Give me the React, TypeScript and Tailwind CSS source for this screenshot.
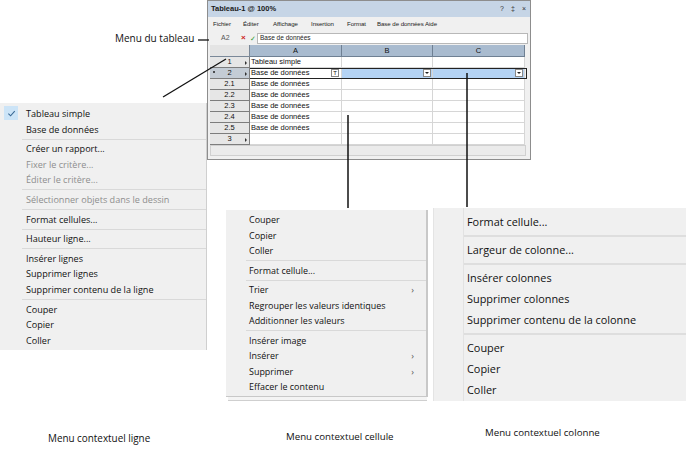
import React from 'react'

type Item = { label: string; disabled?: boolean; sub?: boolean; checked?: boolean } | 'sep'

const rowMenu: Item[] = [
  { label: 'Tableau simple', checked: true },
  { label: 'Base de données' },
  'sep',
  { label: 'Créer un rapport...' },
  { label: 'Fixer le critère...', disabled: true },
  { label: 'Éditer le critère...', disabled: true },
  'sep',
  { label: 'Sélectionner objets dans le dessin', disabled: true },
  'sep',
  { label: 'Format cellules...' },
  'sep',
  { label: 'Hauteur ligne...' },
  'sep',
  { label: 'Insérer lignes' },
  { label: 'Supprimer lignes' },
  { label: 'Supprimer contenu de la ligne' },
  'sep',
  { label: 'Couper' },
  { label: 'Copier' },
  { label: 'Coller' },
]

const cellMenu: Item[] = [
  { label: 'Couper' },
  { label: 'Copier' },
  { label: 'Coller' },
  'sep',
  { label: 'Format cellule...' },
  'sep',
  { label: 'Trier', sub: true },
  { label: 'Regrouper les valeurs identiques' },
  { label: 'Additionner les valeurs' },
  'sep',
  { label: 'Insérer image' },
  { label: 'Insérer', sub: true },
  { label: 'Supprimer', sub: true },
  { label: 'Effacer le contenu' },
]

const colMenu: Item[] = [
  { label: 'Format cellule...' },
  'sep',
  { label: 'Largeur de colonne...' },
  'sep',
  { label: 'Insérer colonnes' },
  { label: 'Supprimer colonnes' },
  { label: 'Supprimer contenu de la colonne' },
  'sep',
  { label: 'Couper' },
  { label: 'Copier' },
  { label: 'Coller' },
]

function Menu({
  items,
  className,
  itemClass,
  sepClass,
  children,
}: {
  items: Item[]
  className: string
  itemClass: string
  sepClass: string
  children?: React.ReactNode
}) {
  return (
    <div className={className}>
      {children}
      {items.map((it, i) =>
        it === 'sep' ? (
          <div key={i} className={sepClass} />
        ) : (
          <div
            key={i}
            className={`${itemClass} ${it.disabled ? 'text-[#8e8e8e]' : 'text-[#111]'}`}
          >
            {it.checked && (
              <span className="absolute left-[4px] top-[0px] w-[14px] h-[14px] bg-[#cce4f7] flex items-center justify-center">
                <svg width="9" height="9" viewBox="0 0 10 10">
                  <path d="M1.5 5.2 L4 7.6 L8.6 2.4" fill="none" stroke="#3b6a95" strokeWidth="1.2" />
                </svg>
              </span>
            )}
            <span>{it.label}</span>
            {it.sub && <span className="ml-auto text-[#555]">›</span>}
          </div>
        ),
      )}
    </div>
  )
}

const rows = [
  { h: '1', a: 'Tableau simple', arrow: true },
  { h: '2', a: 'Base de données', arrow: true, sel: true },
  { h: '2.1', a: 'Base de données' },
  { h: '2.2', a: 'Base de données' },
  { h: '2.3', a: 'Base de données' },
  { h: '2.4', a: 'Base de données' },
  { h: '2.5', a: 'Base de données' },
  { h: '3', a: '', arrow: true },
]

function DropBox() {
  return (
    <span className="ml-auto mr-[1px] w-[8px] h-[8px] bg-white border border-[#888] flex items-center justify-center">
      <span className="w-0 h-0 border-l-[2px] border-r-[2px] border-t-[2px] border-l-transparent border-r-transparent border-t-[#222]" />
    </span>
  )
}

function Spreadsheet() {
  return (
    <div className="absolute left-[207px] top-0 w-[324px] h-[160px] border border-[#8d8d8d] bg-[#f0f0f0] flex flex-col font-['Liberation_Sans',Arial,sans-serif]">
      <div className="h-[16px] shrink-0 bg-[#c6d5e6] flex items-center pl-[3px] pr-[4px] text-[7.5px] font-bold text-[#1a1a1a]">
        <span>Tableau-1 @ 100%</span>
        <span className="ml-auto flex gap-[7px] font-normal text-[7px] text-[#333]">
          <span>?</span>
          <span>‡</span>
          <span>×</span>
        </span>
      </div>
      <div className="h-[14px] shrink-0 flex items-center pl-[5px] text-[6.1px] tracking-[-0.05px] text-[#222] whitespace-nowrap">
        <span className="w-[30px]">Fichier</span>
        <span className="w-[30px]">Éditer</span>
        <span className="w-[38px]">Affichage</span>
        <span className="w-[36px]">Insertion</span>
        <span className="w-[30px]">Format</span>
        <span className="w-[48px]">Base de données</span>
        <span>Aide</span>
      </div>
      <div className="h-[14px] shrink-0 flex items-center text-[7px]">
        <span className="ml-[13px] w-[20px] text-[#555]">A2</span>
        <span className="w-[9px] text-[#cc2020] font-bold text-[8px] leading-none">×</span>
        <span className="w-[7px] text-[#2a9a2a] text-[7px] leading-none">✓</span>
        <div className="w-[271px] h-[11px] bg-white border border-[#b8b8b8] flex items-center pl-[2px] text-[6.5px] text-[#222]">
          Base de données
        </div>
      </div>
      <div className="ml-[2px] w-[317px] flex flex-col text-[7.5px] text-[#111]">
        <div className="flex h-[12px]">
          <div className="w-[40px] bg-[#e4e4e4] border-r border-b border-[#7a8898]" />
          {['A', 'B', 'C'].map((c, i) => (
            <div
              key={c}
              className={`${i === 1 ? 'w-[91px]' : 'w-[92px]'} bg-[#a9bbcf] border-r border-b border-[#6f8093] flex items-center justify-center`}
            >
              {c}
            </div>
          ))}
        </div>
        {rows.map((r) => (
          <div
            key={r.h}
            className={`flex h-[11px] ${r.sel ? 'outline outline-1 outline-[#222] -outline-offset-1' : ''}`}
          >
            <div
              className={`relative w-[40px] ${r.sel ? 'bg-[#c4ccd5]' : 'bg-[#e6e6e6]'} border-r border-b border-[#7d7d7d] flex items-center justify-center`}
            >
              {r.sel && <span className="absolute left-[3px] top-[3px] w-[2px] h-[2px] bg-[#222] rounded-full" />}
              <span>{r.h}</span>
              {r.arrow && (
                <span className="absolute right-[2px] top-[3.5px] w-0 h-0 border-t-[2px] border-b-[2px] border-l-[2px] border-t-transparent border-b-transparent border-l-[#333]" />
              )}
            </div>
            <div className="w-[92px] bg-white border-r border-b border-[#d6d6d6] flex items-center pl-[1px] whitespace-nowrap">
              <span>{r.a}</span>
              {r.sel && (
                <span className="ml-auto mr-[2px] w-[8px] h-[8px] bg-white border border-[#888] flex items-center justify-center text-[6px] leading-none">
                  T
                </span>
              )}
            </div>
            <div className={`w-[91px] ${r.sel ? 'bg-[#b4d3f4]' : 'bg-white'} border-r border-b border-[#d6d6d6] flex items-center`}>
              {r.sel && <DropBox />}
            </div>
            <div className={`w-[92px] ${r.sel ? 'bg-[#b4d3f4]' : 'bg-white'} border-r border-b border-[#d6d6d6] flex items-center`}>
              {r.sel && <DropBox />}
            </div>
          </div>
        ))}
      </div>
      <div className="flex-1 ml-[2px] mr-[4px] mb-[3px] bg-[#ebebeb] border border-[#d0d0d0]" />
    </div>
  )
}

export default function App() {
  return (
    <div className="relative w-[686px] h-[450px] bg-white overflow-hidden font-['Open_Sans',sans-serif]">
      <Spreadsheet />

      <div className="absolute left-[115px] top-[31px] text-[10px] text-[#111]">Menu du tableau</div>

      <Menu
        items={rowMenu}
        className="absolute left-0 top-[103px] w-[207px] h-[247px] bg-[#f0f0f0] border-r border-[#cfcfcf] pt-[3px] text-[9.1px]"
        itemClass="relative h-[15.6px] flex items-center pl-[26px] pr-[10px] whitespace-nowrap"
        sepClass="h-px bg-[#d9d9d9] ml-[22px] my-[1.5px]"
      />

      <div className="absolute left-[228px] top-[396px] w-[199px] h-[5px] bg-[#f4f4f4] border-b border-[#cfcfcf]" />
      <Menu
        items={cellMenu}
        className="absolute left-[226px] top-[210px] w-[202px] h-[187px] bg-[#f0f0f0] border-r-2 border-b border-[#c8c8c8] pt-[2px] text-[8.95px]"
        itemClass="relative h-[15.5px] flex items-center pl-[23px] pr-[12px] whitespace-nowrap"
        sepClass="h-px bg-[#d9d9d9] ml-[20px] my-[1.5px]"
      />

      <Menu
        items={colMenu}
        className="absolute left-[433px] top-[208px] w-[253px] h-[193px] bg-[#f0f0f0] border-l border-[#e4e4e4] pt-[3.5px] text-[10.9px]"
        itemClass="relative h-[21px] flex items-center pl-[33px] whitespace-nowrap"
        sepClass="h-[2px] bg-[#dedede] ml-[29px] my-[2.5px]"
      >
        <div className="absolute left-[29px] top-0 bottom-0 w-px bg-[#e2e2e2]" />
      </Menu>

      <svg className="absolute left-0 top-0" width="686" height="450">
        <line x1="198" y1="40" x2="209" y2="40" stroke="#111" strokeWidth="1.3" />
        <line x1="163" y1="97" x2="226" y2="59" stroke="#111" strokeWidth="1.3" />
        <line x1="348" y1="115" x2="348" y2="208" stroke="#111" strokeWidth="1.5" />
        <line x1="467" y1="73" x2="467" y2="207" stroke="#111" strokeWidth="1.5" />
      </svg>

      <div className="absolute left-[48px] top-[431px] text-[9.9px] text-[#111]">Menu contextuel ligne</div>
      <div className="absolute left-[286px] top-[430px] text-[9.7px] text-[#111]">Menu contextuel cellule</div>
      <div className="absolute left-[485px] top-[426px] text-[9.7px] text-[#111]">Menu contextuel colonne</div>
    </div>
  )
}
